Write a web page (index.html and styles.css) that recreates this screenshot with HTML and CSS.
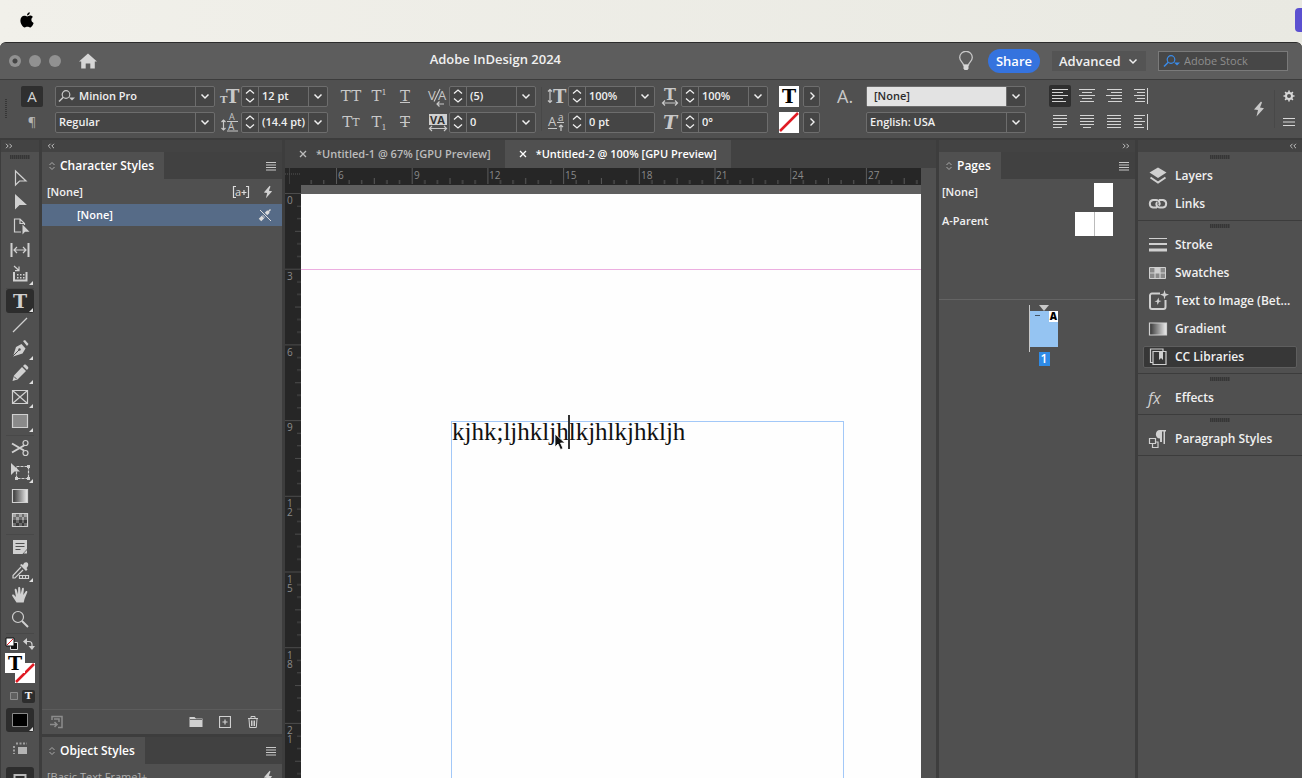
FILE: index.html
```html
<!DOCTYPE html>
<html lang="en">
<head>
<meta charset="utf-8">
<title>Adobe InDesign 2024</title>
<link rel="stylesheet" href="styles.css">
</head>
<body>
<svg class="defs" aria-hidden="true">
  <symbol id="chev" viewBox="0 0 10 10"><path d="M1.500 3.500 5 7l3.500-3.500" fill="none" stroke="currentColor" stroke-width="1.500"/></symbol>
  <symbol id="spin" viewBox="0 0 10 16"><path d="M1 5.500 5 2l4 3.500M1 10.500 5 14l4-3.500" fill="none" stroke="currentColor" stroke-width="1.300"/></symbol>
  <symbol id="right" viewBox="0 0 10 10"><path d="M3.500 1.500 7 5 3.500 8.500" fill="none" stroke="currentColor" stroke-width="1.400"/></symbol>
  <symbol id="find" viewBox="0 0 18 14"><circle cx="8" cy="5.500" r="3.800" fill="none" stroke="currentColor" stroke-width="1.200"/><path d="M5.300 8.300 1 12.500" stroke="currentColor" stroke-width="1.500"/><path d="M11 8.500h6l-3 3z" fill="currentColor"/></symbol>
  <symbol id="bolt" viewBox="0 0 12 16"><path d="M8 .5 1 8.500l4 .6L3.500 15.500 11 7.200l-4-.8 2-5z" fill="currentColor"/></symbol>
  <symbol id="menu" viewBox="0 0 12 10"><path d="M1 1.500h10M1 4h10M1 6.500h10M1 9h10" stroke="currentColor"/></symbol>
  <symbol id="updown" viewBox="0 0 8 10"><path d="M1.500 4 4 1.500 6.500 4M1.500 6 4 8.500 6.500 6" fill="none" stroke="currentColor"/></symbol>
  <symbol id="dblr" viewBox="0 0 8 6"><path d="M1 .8 3.200 3 1 5.200M4.500.8 6.700 3 4.500 5.200" fill="none" stroke="currentColor"/></symbol>
  <symbol id="dbll" viewBox="0 0 8 6"><path d="M3.500.8 1.300 3 3.500 5.200M7 .8 4.800 3 7 5.200" fill="none" stroke="currentColor"/></symbol>
  <symbol id="cross" viewBox="0 0 8 8"><path d="M1 1l6 6M7 1 1 7" stroke="currentColor" stroke-width="1.300"/></symbol>
</svg>

<header class="menubar">
  <svg class="apple" viewBox="0 0 14 16"><path d="M9.800.3c.1 1.600-1.200 3.100-2.800 3.100C6.900 1.900 8.300.500 9.800.3zM7.200 4.400c.7 0 1.600-.8 3-.8 1.100 0 2.200.6 2.800 1.500-2.400 1.400-2 4.900.6 5.800-.5 1.700-2.100 4.500-3.500 4.500-1 0-1.500-.6-2.700-.6s-1.800.6-2.700.6C2.700 15.400.4 11.800.4 8.600c0-3.100 1.900-4.800 3.900-4.800 1.300 0 2.200.6 2.900.6z"/></svg>
  <span class="menu-extra"></span>
</header>

<div class="window">
  <div class="titlebar">
    <div class="side">
      <button class="light close" aria-label="Close"></button><button class="light" aria-label="Minimise"></button><button class="light" aria-label="Zoom"></button>
      <button class="home" aria-label="Home"><svg width="18" height="16" viewBox="0 0 18 16"><path d="M9 .5 0 8.500h2.200V15.500h4.500v-5h4.600v5h4.500V8.500H18z" fill="#d6d6d6"/></svg></button>
    </div>
    <h1 class="apptitle">Adobe InDesign 2024</h1>
    <div class="side end">
      <button class="bulb" aria-label="Tips"><svg width="16" height="20" viewBox="0 0 16 20"><path d="M5.500 14c0-2.500-3.800-3.700-3.800-7.400a6.300 6.300 0 0 1 12.600 0c0 3.700-3.800 4.900-3.800 7.400z" fill="none" stroke="#c8c8c8" stroke-width="1.300"/><path d="M5.500 14h5v3.500l-1 1.500h-3l-1-1.500z" fill="#d8d8d8"/></svg></button>
      <button class="share">Share</button>
      <button class="workspace">Advanced <svg width="10" height="10"><use href="#chev"/></svg></button>
      <label class="stock"><svg width="18" height="14"><use href="#find"/></svg><input type="search" placeholder="Adobe Stock" aria-label="Adobe Stock"></label>
    </div>
  </div>

  <div class="control">
    <span class="handle"></span>
    <div class="col modes"><button class="mode on" aria-label="Character">A</button><button class="mode pilcrow" aria-label="Paragraph">¶</button></div>
    <div class="col wide">
      <div class="field"><svg class="lead" width="18" height="14"><use href="#find"/></svg><input value="Minion Pro" aria-label="Font"><button class="drop" aria-label="Fonts"><svg><use href="#chev"/></svg></button></div>
      <div class="field"><input value="Regular" aria-label="Font style"><button class="drop" aria-label="Styles"><svg><use href="#chev"/></svg></button></div>
    </div>
    <div class="col glyphs">
      <span class="gl"><svg viewBox="0 0 20 20"><text x="0" y="17" font-size="10" font-weight="bold">T</text><text x="6" y="17" font-size="18" font-weight="bold">T</text></svg></span>
      <span class="gl"><svg viewBox="0 0 20 20"><text class="sans" x="9" y="8" font-size="9">A</text><text class="sans" x="8" y="18" font-size="10">A</text><path d="M7 9.500h11M7 19h11M3.500 8v10M1.500 10l2-2 2 2M1.500 16l2 2 2-2" class="ln"/></svg></span>
    </div>
    <div class="col num">
      <div class="field"><button class="spin" aria-label="Step size"><svg><use href="#spin"/></svg></button><input value="12 pt" aria-label="Font size"><button class="drop" aria-label="Sizes"><svg><use href="#chev"/></svg></button></div>
      <div class="field"><button class="spin" aria-label="Step leading"><svg><use href="#spin"/></svg></button><input value="(14.4 pt)" aria-label="Leading"><button class="drop" aria-label="Leadings"><svg><use href="#chev"/></svg></button></div>
    </div>
    <div class="case">
      <button>TT</button><button>T<sup>1</sup></button><button class="ul">T</button>
      <button>T<small>T</small></button><button>T<sub>1</sub></button><button class="st">T</button>
    </div>
    <div class="col glyphs">
      <span class="gl"><svg viewBox="0 0 20 20"><text class="sans" x="0" y="14" font-size="13">V</text><text class="sans" x="10" y="14" font-size="13">A</text><path d="M12 3 6 15.500M9 18h7M11.500 15.500 9 18l2.500 2.500" class="ln"/></svg></span>
      <span class="gl"><svg viewBox="0 0 20 20"><path d="M1 2h18v11H1z" fill="#d0d0d0"/><text x="2" y="12" font-size="11" font-weight="bold" class="sans dark">VA</text><path d="M1.500 16.500h17M4 14l-2.500 2.500L4 19M16 14l2.500 2.500L16 19" class="ln"/></svg></span>
    </div>
    <div class="col num">
      <div class="field"><button class="spin" aria-label="Step kerning"><svg><use href="#spin"/></svg></button><input value="(5)" aria-label="Kerning"><button class="drop" aria-label="Kernings"><svg><use href="#chev"/></svg></button></div>
      <div class="field"><button class="spin" aria-label="Step tracking"><svg><use href="#spin"/></svg></button><input value="0" aria-label="Tracking"><button class="drop" aria-label="Trackings"><svg><use href="#chev"/></svg></button></div>
    </div>
    <span class="rule"></span>
    <div class="col glyphs">
      <span class="gl"><svg viewBox="0 0 20 20"><text x="6" y="17" font-size="18" font-weight="bold">T</text><path d="M3 3.500v13M1 5.500l2-2 2 2M1 14.500l2 2 2-2" class="ln"/></svg></span>
      <span class="gl"><svg viewBox="0 0 20 20"><text class="sans" x="1" y="14" font-size="13">A</text><text class="sans" x="11" y="9" font-size="10">a</text><path d="M1 16.500h9M10 10.500h7M14 19v-6M12 15l2-2 2 2" class="ln"/></svg></span>
    </div>
    <div class="col num">
      <div class="field"><button class="spin" aria-label="Step vertical scale"><svg><use href="#spin"/></svg></button><input value="100%" aria-label="Vertical scale"><button class="drop" aria-label="Vertical scales"><svg><use href="#chev"/></svg></button></div>
      <div class="field"><button class="spin" aria-label="Step baseline shift"><svg><use href="#spin"/></svg></button><input value="0 pt" aria-label="Baseline shift"></div>
    </div>
    <div class="col glyphs">
      <span class="gl"><svg viewBox="0 0 20 20"><text x="4" y="14" font-size="16" font-weight="bold">T</text><path d="M2.500 17h15M5 14.500 2.500 17 5 19.500M15 14.500l2.500 2.500-2.500 2.500" class="ln"/></svg></span>
      <span class="gl"><svg viewBox="0 0 20 20"><text x="3" y="17" font-size="19" font-style="italic">T</text></svg></span>
    </div>
    <div class="col num">
      <div class="field"><button class="spin" aria-label="Step horizontal scale"><svg><use href="#spin"/></svg></button><input value="100%" aria-label="Horizontal scale"><button class="drop" aria-label="Horizontal scales"><svg><use href="#chev"/></svg></button></div>
      <div class="field"><button class="spin" aria-label="Step skew"><svg><use href="#spin"/></svg></button><input value="0°" aria-label="Skew"></div>
    </div>
    <div class="col paint">
      <div class="pair"><button class="chip fillchip">T</button><button class="go" aria-label="Fill options"><svg><use href="#right"/></svg></button></div>
      <div class="pair"><button class="chip nochip" aria-label="No stroke"><svg viewBox="0 0 20 20"><path d="M1 19 19 1" stroke="#e01b24" stroke-width="2.500"/></svg></button><button class="go" aria-label="Stroke options"><svg><use href="#right"/></svg></button></div>
    </div>
    <div class="col cs"><span class="adot">A.</span></div>
    <div class="col wide">
      <div class="field"><input class="lit" value="[None]" aria-label="Character style"><button class="drop" aria-label="Character styles"><svg><use href="#chev"/></svg></button></div>
      <div class="field"><input value="English: USA" aria-label="Language"><button class="drop" aria-label="Languages"><svg><use href="#chev"/></svg></button></div>
    </div>
    <div class="aligns">
      <button class="on" aria-label="Align left"><svg viewBox="0 0 16 16"><path d="M0 1.500h16M0 4.500h11M0 7.500h16M0 10.500h11M0 13.500h14"/></svg></button>
      <button aria-label="Align centre"><svg viewBox="0 0 16 16"><path d="M0 1.500h16M3 4.500h10M0 7.500h16M3 10.500h10M1 13.500h14"/></svg></button>
      <button aria-label="Align right"><svg viewBox="0 0 16 16"><path d="M1 1.500h15M5 4.500h11M0 7.500h16M5 10.500h11M2 13.500h14"/></svg></button>
      <button aria-label="Align towards spine"><svg viewBox="0 0 16 16"><path d="M1 1.500h11M4 4.500h8M1 7.500h11M4 10.500h8M2 13.500h10M14.500 0v16"/></svg></button>
      <button aria-label="Justify, last left"><svg viewBox="0 0 16 16"><path d="M1 1.500h14M1 4.500h14M1 7.500h14M1 10.500h14M1 13.500h9"/></svg></button>
      <button aria-label="Justify, last centred"><svg viewBox="0 0 16 16"><path d="M1 1.500h14M1 4.500h14M1 7.500h14M1 10.500h14M4 13.500h8"/></svg></button>
      <button aria-label="Justify all"><svg viewBox="0 0 16 16"><path d="M1 1.500h14M1 4.500h14M1 7.500h14M1 10.500h14M1 13.500h14"/></svg></button>
      <button aria-label="Align away from spine"><svg viewBox="0 0 16 16"><path d="M1 1.500h11M1 4.500h8M1 7.500h11M1 10.500h8M1 13.500h10M14.500 0v16"/></svg></button>
    </div>
    <button class="quick" aria-label="Quick apply"><svg width="12" height="16"><use href="#bolt"/></svg></button>
    <div class="col last">
      <button aria-label="Customise"><svg width="12" height="12" viewBox="0 0 12 12"><circle cx="6" cy="6" r="3" fill="none" stroke="#d8d8d8" stroke-width="2"/><path d="M6 .5V3M6 9v2.500M.5 6H3M9 6h2.500M2.100 2.100 3.800 3.800M8.200 8.200l1.700 1.700M9.900 2.100 8.200 3.800M3.800 8.200 2.100 9.900" stroke="#d8d8d8" stroke-width="1.600"/></svg></button>
      <button aria-label="Menu"><svg width="12" height="12" viewBox="0 0 12 12"><path d="M0 2.500h12M0 6h12M0 9.500h12" stroke="#d8d8d8" stroke-width="1.200"/></svg></button>
    </div>
  </div>

  <main class="work">
    <nav class="tools" aria-label="Tools">
      <div class="strip"><svg width="8" height="6"><use href="#dblr"/></svg></div>
      <span class="grip"></span>
      <div class="set">
        <button class="tool" aria-label="Selection"><svg viewBox="0 0 20 20"><path d="M5.500 3v14l4-4H16z" class="o"/></svg></button>
        <button class="tool" aria-label="Direct selection"><svg viewBox="0 0 20 20"><path d="M5 2v15.500l4.500-4.500H17z" class="f"/></svg></button>
        <button class="tool" aria-label="Page"><svg viewBox="0 0 20 20"><path d="M11 16H4.500V3H10l4.500 4.500V9M10 3v4.500h4.500" class="o"/><path d="M12.500 8.500v10l2.500-2.800h4.500z" class="f"/></svg></button>
        <button class="tool" aria-label="Gap"><svg viewBox="0 0 20 20"><path d="M1.500 3v14M18.500 3v14" class="o w2"/><path d="M4 10h12M7 7l-3 3 3 3M13 7l3 3-3 3" class="o"/></svg></button>
        <button class="tool more" aria-label="Content collector"><svg viewBox="0 0 20 20"><path d="M4 8v8.500h12.500V8" class="o w2"/><path d="M4 2l5 4.500M9 2.500v4.200H5" class="o"/><path d="M7 10h1.500v1.500H7zM10 10h1.500v1.500H10zM13 10h1.500v1.500H13zM7 13h1.500v1.500H7zM10 13h1.500v1.500H10zM13 13h1.500v1.500H13z" class="f"/></svg></button>
      </div>
      <div class="set">
        <button class="tool more on" aria-label="Type"><span class="tt">T</span></button>
        <button class="tool" aria-label="Line"><svg viewBox="0 0 20 20"><path d="M3 17 17 3" class="o"/></svg></button>
        <button class="tool more" aria-label="Pen"><svg viewBox="0 0 20 20"><path d="m11.500 5 4 4.500-3 5-9.500 3 3-9.500zM13 2l2-1 3.500 4-1.500 2z" class="f"/><path d="m3 17 6-6" stroke="#505050"/><circle cx="9.500" cy="10.500" r="1.200" fill="#505050"/></svg></button>
        <button class="tool more" aria-label="Pencil"><svg viewBox="0 0 20 20"><path d="m12 4 4 4-8.500 8.500L2.500 18 4 12.500zM13 3l1.500-1.500c1-.8 4.500 2.500 3.800 3.700L17 7z" class="f"/><path d="m4 13.500 2.500 2.500" stroke="#505050"/></svg></button>
        <button class="tool more" aria-label="Rectangle frame"><svg viewBox="0 0 20 20"><path d="M2.500 3.500h15v13h-15zM2.500 3.500l15 13M17.500 3.500l-15 13" class="o"/></svg></button>
        <button class="tool more" aria-label="Rectangle"><svg viewBox="0 0 20 20"><path d="M2.500 3.500h15v13h-15z" fill="#8a8a8a" stroke="#d0d0d0" stroke-width="1.200"/></svg></button>
      </div>
      <div class="set">
        <button class="tool" aria-label="Scissors"><svg viewBox="0 0 20 20"><path d="M2 5.500 14 12.500M2 14.500 14 7.500" class="o w2"/><circle cx="15.500" cy="5" r="2.500" class="o"/><circle cx="15.500" cy="15" r="2.500" class="o"/></svg></button>
        <button class="tool more" aria-label="Free transform"><svg viewBox="0 0 20 20"><path d="M6.500 4.500h12v12h-12z" class="o" stroke-dasharray="3 1"/><path d="M5 15h3v3H5zM17 15h3v3h-3zM17 3h3v3h-3z" class="f"/><path d="M1 1v12l3.500-3.500H10z" class="f"/></svg></button>
        <button class="tool" aria-label="Gradient swatch"><svg viewBox="0 0 20 20"><defs><linearGradient id="g1"><stop stop-color="#333"/><stop offset="1" stop-color="#eee"/></linearGradient></defs><path d="M2.500 3.500h15v13h-15z" fill="url(#g1)" stroke="#d0d0d0" stroke-width="1.200"/></svg></button>
        <button class="tool" aria-label="Gradient feather"><svg viewBox="0 0 20 20"><path d="M2.500 3.500h15v13h-15z" fill="#6c6c6c" stroke="#d0d0d0" stroke-width="1.200"/><path d="M3 4h3v3H3zM9 4h3v3H9zM14 4h3v3h-3zM6 7h3v3H6zM12 7h2v3h-2z" fill="#a4a4a4"/><path d="M3 10h3v3H3zM9 10h3v3H9zM14 10h3v3h-3zM6 13h3v3H6zM12 13h2v3h-2z" fill="#3c3c3c"/></svg></button>
      </div>
      <div class="set">
        <button class="tool" aria-label="Note"><svg viewBox="0 0 20 20"><path d="M3 3h14v9l-4.500 5H3z" class="f"/><path d="M5.500 6.500h9M5.500 9.500h9M5.500 12.500h5" stroke="#505050"/><path d="M13.500 16.500 17 13v3.500z" class="f"/></svg></button>
        <button class="tool more" aria-label="Colour theme"><svg viewBox="0 0 20 20"><path d="m11 6-8 8.500V17h2l8-8" class="o"/><path d="m10 4 6 6 1.500-1.500-1-1.500C19 5 18.500 2 17 1.500S14 1.500 13 4l-1.500-1z" class="f"/><path d="M9.500 14.500h9v3h-9zM12.500 14.500v3M15.500 14.500v3" class="o"/></svg></button>
        <button class="tool" aria-label="Hand"><svg viewBox="0 0 20 20"><path d="M6.500 17.500 2.300 11c-.7-1.300.6-2 1.500-1.200L6 12 4.700 5c-.2-1.400 1.500-1.700 1.900-.4L8 9.300 8.200 3c0-1.400 1.900-1.400 2 0l.5 6.300L12 3.600c.3-1.300 2-.9 1.900.4l-.6 6 2.300-3.500c.8-1.100 2.200-.2 1.600 1L14.500 14l-.8 3.500z" class="f"/></svg></button>
        <button class="tool" aria-label="Zoom"><svg viewBox="0 0 20 20"><circle cx="8" cy="8" r="5.500" class="o"/><path d="m12 12 6 6" class="o w2"/></svg></button>
      </div>
      <div class="mini">
        <button aria-label="Default colours"><svg width="14" height="14" viewBox="0 0 14 14"><path d="M5.500 5.500h7v7h-7z" fill="#111" stroke="#ddd"/><path d="M1 1h8v8H1z" fill="#fff" stroke="#111"/><path d="m2 8 6-6" stroke="#e01b24"/></svg></button>
        <button aria-label="Swap colours"><svg width="12" height="12" viewBox="0 0 12 12"><path d="M3 3.500h3c2 0 3 1 3 3v2" class="o"/><path d="M4 0v7L0 3.500zM5.500 8H12l-3 4z" class="f"/></svg></button>
      </div>
      <div class="swatches"><span class="stroke-sw"><svg viewBox="0 0 20 20"><path d="M1 19 19 1" stroke="#e01b24" stroke-width="2.500"/></svg></span><span class="fill-sw">T</span></div>
      <div class="mini low">
        <button aria-label="Affects container"><svg width="10" height="10" viewBox="0 0 10 10"><path d="M1.500 1.500h7v7h-7z" fill="#606060" stroke="#8c8c8c"/></svg></button>
        <button class="on" aria-label="Affects text">T</button>
      </div>
      <button class="tool more on" aria-label="Apply colour"><svg viewBox="0 0 20 20"><path d="M2.500 3.500h15v13h-15z" fill="#000" stroke="#8a8a8a"/></svg></button>
      <button class="tool late" aria-label="View options"><svg viewBox="0 0 20 20"><path d="M8 8h9v7H8z" fill="#b4b4b4"/><path d="M4 7v8M6 4.500h11" stroke="#a0a0a0" stroke-width="2" stroke-dasharray="2 1.500"/></svg></button>
      <button class="tool on" aria-label="Screen mode"><svg viewBox="0 0 20 20"><path d="M4.500 6h11v11h-11z" fill="none" stroke="#b8b8b8" stroke-width="2"/><path d="M8 9h5v5H8z" class="f"/></svg></button>
    </nav>

    <aside class="left">
      <div class="strip"><svg width="8" height="6"><use href="#dbll"/></svg></div>
      <section class="panel grow">
        <div class="tabs"><h2 class="tab"><svg width="8" height="10"><use href="#updown"/></svg>Character Styles</h2><button class="pm" aria-label="Panel menu"><svg width="12" height="10"><use href="#menu"/></svg></button></div>
        <div class="prow"><span>[None]</span><svg class="aplus" width="18" height="14" viewBox="0 0 18 14"><path d="M4 1.500H1.500v11H4M14 1.500h2.500v11H14M9.500 7.500h5M12 5v5" fill="none" stroke="#dcdcdc" stroke-width="1.200"/><text x="3" y="11" font-size="11" fill="#dcdcdc">a</text></svg><svg width="10" height="14"><use href="#bolt"/></svg></div>
        <div class="prow picked"><span>[None]</span><svg width="14" height="14" viewBox="0 0 14 14"><path d="M2 12 5 9M5.500 8.500l5-5" stroke="#dcdcdc" stroke-width="3.500"/><path d="m10 4 2.500-2.500" stroke="#dcdcdc" stroke-width="1.500"/><path d="m2 2 11 11" stroke="#566b87" stroke-width="3"/><path d="m2 2 11 11" stroke="#dcdcdc"/></svg></div>
        <div class="space"></div>
        <div class="foot">
          <button aria-label="Load" class="dim"><svg width="14" height="14" viewBox="0 0 14 14"><path d="M3 5V1.500h10v11H9M1 9.500h7M5.500 7 8 9.500 5.500 12M5 4h5v3" fill="none" stroke="#8c8c8c" stroke-width="1.500"/></svg></button>
          <button aria-label="New group"><svg width="14" height="12" viewBox="0 0 14 12"><path d="M.5 1h5l1.500 1.500h6.500v8.500H.5z" fill="#d0d0d0"/><path d="M1 3.500h12" stroke="#6a6a6a"/></svg></button>
          <button aria-label="New style"><svg width="12" height="12" viewBox="0 0 12 12"><path d="M.5.5h11v11H.5zM6 3.500v5M3.500 6h5" fill="none" stroke="#d0d0d0" stroke-width="1.200"/></svg></button>
          <button aria-label="Delete"><svg width="12" height="14" viewBox="0 0 12 14"><path d="M1 3.500h10M4 3V1.500h4V3M2 4l.7 8.500h6.600L10 4M4.500 5.500v5.500M6 5.500v5.500M7.500 5.500v5.500" fill="none" stroke="#d0d0d0"/></svg></button>
        </div>
      </section>
      <section class="panel">
        <div class="tabs"><h2 class="tab"><svg width="8" height="10"><use href="#updown"/></svg>Object Styles</h2><button class="pm" aria-label="Panel menu"><svg width="12" height="10"><use href="#menu"/></svg></button></div>
        <div class="prow faint"><span>[Basic Text Frame]+</span><svg width="10" height="14"><use href="#bolt"/></svg></div>
      </section>
    </aside>

    <section class="doc">
      <div class="doctabs">
        <button class="dtab"><svg width="8" height="8"><use href="#cross"/></svg>*Untitled-1 @ 67% [GPU Preview]</button>
        <button class="dtab on"><svg width="8" height="8"><use href="#cross"/></svg>*Untitled-2 @ 100% [GPU Preview]</button>
      </div>
      <div class="view">
        <svg class="corner" viewBox="0 0 16 16"><path d="M4.500 0v16M0 5.500h16" stroke="#555" stroke-dasharray="1 1"/></svg>
        <svg class="hruler">
          <defs><pattern id="ph" x="35" width="75.700" height="16" patternUnits="userSpaceOnUse"><path d="M.5 0v16M13.100 12v4M25.700 12v4M38.300 10v6M50.900 12v4M63.500 12v4" stroke="#5a5a5a"/></pattern></defs>
          <rect width="100%" height="16" fill="url(#ph)"/>
          <text x="37" y="11">6</text><text x="113" y="11">9</text><text x="188" y="11">12</text><text x="264" y="11">15</text><text x="340" y="11">18</text><text x="415" y="11">21</text><text x="491" y="11">24</text><text x="567" y="11">27</text>
        </svg>
        <svg class="vruler">
          <defs><pattern id="pv" y="8" width="16" height="75.700" patternUnits="userSpaceOnUse"><path d="M0 .5h16M12 13.100h4M12 25.700h4M10 38.300h6M12 50.900h4M12 63.500h4" stroke="#4c4c4c"/></pattern></defs>
          <rect width="16" height="100%" fill="url(#pv)"/>
          <text x="2" y="19">0</text><text x="2" y="95">3</text><text x="2" y="171">6</text><text x="2" y="246">9</text>
          <text><tspan x="2" y="322">1</tspan><tspan x="2" y="331">2</tspan></text>
          <text><tspan x="2" y="398">1</tspan><tspan x="2" y="407">5</tspan></text>
          <text><tspan x="2" y="474">1</tspan><tspan x="2" y="483">8</tspan></text>
          <text><tspan x="2" y="549">2</tspan><tspan x="2" y="558">1</tspan></text>
        </svg>
        <div class="canvas">
          <div class="sheet">
            <div class="margin"></div>
            <div class="frame"><p>kjhk;ljhkljh<i class="caret"></i>lkjhlkjhkljh</p></div>
            <svg class="pointer" viewBox="0 0 12 18"><path d="M1 1v13l3-3 2.500 5.500 2.500-1L6.500 10H11z" fill="#111" stroke="#fff" stroke-width=".8"/></svg>
          </div>
        </div>
        <div class="scroll"></div>
      </div>
    </section>

    <aside class="pages">
      <div class="strip end"><svg width="8" height="6"><use href="#dblr"/></svg></div>
      <section class="panel grow">
        <div class="tabs"><h2 class="tab"><svg width="8" height="10"><use href="#updown"/></svg>Pages</h2><button class="pm" aria-label="Panel menu"><svg width="12" height="10"><use href="#menu"/></svg></button></div>
        <div class="masters">
          <div class="master"><span>[None]</span><i class="leaf"></i></div>
          <div class="master"><span>A-Parent</span><i class="leaf"></i><i class="leaf second"></i></div>
        </div>
        <div class="spreads">
          <svg class="mark" width="10" height="6" viewBox="0 0 10 6"><path d="M0 0h10L5 6z" fill="#c8c8c8"/></svg>
          <div class="thumb"><i class="spine"></i><i class="dash"></i><b>A</b></div>
          <span class="pno">1</span>
        </div>
      </section>
    </aside>

    <aside class="dock">
      <div class="strip end"><svg width="8" height="6"><use href="#dbll"/></svg></div>
      <div class="group"><span class="grip"></span>
        <button class="item"><svg viewBox="0 0 20 20"><path d="m10 1.500 8.500 5L10 12 1.500 6.500z" class="f"/><path d="m2.500 11.500 7.500 5 7.500-5" class="o w2"/></svg>Layers</button>
        <button class="item"><svg viewBox="0 0 20 20"><path d="M9 13.500H5a3.800 3.800 0 0 1 0-7.500h3a3.500 3.500 0 0 1 3 5.500M11 6h4a3.800 3.800 0 0 1 0 7.500h-3a3.500 3.500 0 0 1-3-5.500" class="o w2"/></svg>Links</button>
      </div>
      <div class="group"><span class="grip"></span>
        <button class="item"><svg viewBox="0 0 20 20"><path d="M1 3.500h18" class="o"/><path d="M1 9h18" class="o w2"/><path d="M1 15h18" stroke="#d0d0d0" stroke-width="3"/></svg>Stroke</button>
        <button class="item"><svg viewBox="0 0 20 20"><path d="M1.500 4.500h16v11h-16z" fill="#8a8a8a" stroke="#d0d0d0"/><path d="M7 5h5v5H7z" class="f"/><path d="M2 10h15.500M7 5v10.500M12 5v10.500" class="o"/></svg>Swatches</button>
        <button class="item"><svg viewBox="0 0 20 20"><path d="M12 2.500H4a2 2 0 0 0-2 2V16a2 2 0 0 0 2 2h11.500a2 2 0 0 0 2-2V9" class="o w2"/><path d="m16.500-1 1 3.500L21 3.500 17.500 5l-1 3.500-1-3.500L12 3.500l3.500-1zM10.500 6.500l.5 3 2.500.5-2.500 1-1.500 3-.5-3-2.500-.5 2.500-1z" class="f"/></svg>Text to Image (Bet...</button>
        <button class="item"><svg viewBox="0 0 20 20"><path d="M1.500 4h17v12h-17z" fill="url(#g1)" stroke="#d0d0d0" stroke-width="1.200"/></svg>Gradient</button>
        <button class="item on"><svg viewBox="0 0 20 20"><path d="M5 4.500h13v13H5zM5 15.500H2.500V2H15v2.500" class="o"/><path d="M11 5h4v8l-2-2-2 2z" class="f"/></svg>CC Libraries</button>
      </div>
      <div class="group"><span class="grip"></span>
        <button class="item"><span class="fx">fx</span>Effects</button>
      </div>
      <div class="group"><span class="grip"></span>
        <button class="item"><svg viewBox="0 0 20 20"><path d="M12 9.500C6.500 9.500 6.500 1 12 1h6v1.500h-1V15h-1.500V2.500H14V13h-2z" class="f"/><path d="M1.500 9.500h6v5h-6zM4.500 14.500v4h5.500v-5.500H7.500" class="o"/></svg>Paragraph Styles</button>
      </div>
    </aside>
  </main>
</div>
</body>
</html>
```

FILE: styles.css
```css
* { box-sizing: border-box; }
body {
  margin: 0;
  height: 100vh;
  display: flex;
  flex-direction: column;
  overflow: hidden;
  background: #eeede7;
  color: #f0f0f0;
  font: 600 11px/16px "Open Sans", "Noto Sans", sans-serif;
}
button, input {
  margin: 0; padding: 0; border: 0; background: none; color: inherit; font: inherit; min-width: 0;
}
h1, h2, p { margin: 0; font: inherit; }
svg { display: block; flex: none; }
.defs { position: absolute; width: 0; height: 0; }
.o { fill: none; stroke: #d0d0d0; stroke-width: 1.2; }
.w2 { stroke-width: 2; }
.f { fill: #d0d0d0; }

.menubar { flex: none; height: 42px; display: flex; align-items: center; justify-content: space-between; padding: 0 0 2px 20px; background: linear-gradient(90deg, #f1f0ea, #e9e9e2); }
.apple { width: 14px; height: 16px; }
.menu-extra { width: 7px; height: 24px; border-radius: 4px 0 0 4px; background: #5b50d0; }

.window { flex: 1; min-height: 0; display: flex; flex-direction: column; border-top: 1px solid #2c2c2c; border-radius: 6px 6px 0 0; background: #505050; overflow: hidden; }
.titlebar { flex: none; height: 37px; display: flex; align-items: center; background: #5d5d5d; border-bottom: 1px solid #3c3c3c; }
.side { flex: none; width: 33%; display: flex; align-items: center; padding-left: 9px; }
.side.end { flex: 1; width: auto; justify-content: flex-end; padding: 0 14px 0 0; }
.light { width: 12px; height: 12px; margin-right: 8px; border-radius: 50%; background: #919191; }
.close { background: radial-gradient(circle, #444 0 2px, #919191 3px); }
.home { margin-left: 10px; }
.apptitle { font-size: 13px; padding-bottom: 4px; }
.bulb { margin-right: 14px; }
.share { width: 52px; height: 24px; border-radius: 12px; background: #3573de; color: #fff; font-size: 13px; margin-right: 12px; }
.workspace { width: 94px; height: 20px; display: flex; align-items: center; justify-content: space-between; padding: 0 8px 0 7px; background: #545454; font-size: 13px; margin-right: 12px; }
.stock { width: 130px; height: 20px; display: flex; align-items: center; gap: 3px; padding: 0 4px; border: 1px solid #7a7a7a; background: #474747; color: #3b8be8; }
.stock input { flex: 1; font-weight: 400; }
.stock input::placeholder { color: #8e8e8e; opacity: 1; }

.control { flex: none; height: 60px; display: flex; align-items: center; padding: 0 7px 0 5px; border-bottom: 2px solid #3c3c3c; background: #505050; }
.handle { width: 2px; height: 20px; margin-right: 14px; background: repeating-linear-gradient(#363636 0 1px, #505050 1px 2px); }
.col { display: flex; flex-direction: column; gap: 5px; flex: none; }
.modes { width: 22px; margin-right: 12px; }
.mode { height: 21px; border-radius: 2px; color: #d4d4d4; font-size: 15px; font-weight: 400; }
.mode.on { background: #2f2f2f; }
.pilcrow { font-size: 13px; color: #b4b4b4; }
.wide { width: 160px; }
.num { width: 87px; }
.field { height: 21px; display: flex; border: 1px solid #6d6d6d; border-radius: 2px; background: #454545; }
.field input { flex: 1; padding-left: 3px; }
.field .lead { align-self: center; margin: 0 0 0 2px; color: #c8c8c8; }
.field .lit { background: #e3e3e3; color: #2c2c2c; padding-left: 7px; }
.drop, .spin { flex: none; width: 19px; display: flex; align-items: center; justify-content: center; border-left: 1px solid #6d6d6d; }
.spin { width: 17px; border: 0; border-right: 1px solid #6d6d6d; }
.drop svg { width: 10px; height: 10px; }
.spin svg { width: 10px; height: 16px; }
.glyphs { width: 20px; margin: 0 1px 0 5px; }
.gl { height: 21px; }
.gl svg { width: 20px; height: 20px; overflow: visible; fill: #c8c8c8; font-family: "DejaVu Serif", serif; }
.gl .sans { font-family: "Open Sans", sans-serif; font-weight: 400; }
.gl .dark { fill: #333; font-weight: 700; }
.gl .ln { fill: none; stroke: #c8c8c8; stroke-width: 1.2; }
.case { flex: none; display: grid; grid-template-columns: 22px 22px 18px; grid-auto-rows: 21px; column-gap: 6px; row-gap: 5px; margin: 0 9px 0 12px; }
.case button { color: #c8c8c8; font: 15px/20px "DejaVu Serif", serif; white-space: nowrap; display: flex; justify-content: center; align-items: center; }
.case small { font-size: 11px; align-self: flex-end; }
.case sup, .case sub { font-size: 8px; line-height: 10px; align-self: flex-start; padding-top: 2px; }
.case sub { align-self: flex-end; }
.case .ul { text-decoration: underline; }
.case .st { text-decoration: line-through; }
.rule { width: 1px; height: 44px; margin: 0 0 0 5px; background: #484848; }
.paint { margin: 0 17px 0 11px; }
.pair { display: flex; gap: 4px; height: 21px; }
.chip { width: 20px; background: #fff; color: #000; }
.fillchip { font: 700 19px/20px "DejaVu Serif", serif; }
.go { width: 17px; display: flex; align-items: center; justify-content: center; border: 1px solid #6d6d6d; border-radius: 2px; background: #454545; }
.go svg { width: 10px; height: 10px; }
.cs { width: 29px; height: 47px; }
.adot { font-size: 18px; line-height: 21px; font-weight: 400; color: #c8c8c8; }
.aligns { flex: none; display: grid; grid-template-columns: repeat(4, 22px); grid-auto-rows: 22px; column-gap: 5px; row-gap: 4px; margin-left: 23px; }
.aligns button { display: flex; align-items: center; justify-content: center; border-radius: 2px; }
.aligns .on { background: #2f2f2f; }
.aligns svg { width: 16px; height: 16px; stroke: #d4d4d4; }
.quick { margin: 0 9px 0 auto; color: #c8c8c8; }
.last { width: 21px; gap: 14px; align-items: flex-end; border-left: 1px solid #484848; }

.work { flex: 1; min-height: 0; display: flex; background: #3d3d3d; gap: 3px; }
.strip { flex: none; height: 12px; display: flex; align-items: center; padding: 0 5px; background: #434343; color: #c0c0c0; }
.strip.end { justify-content: flex-end; }
.grip { flex: none; align-self: center; width: 20px; height: 4px; margin: 3px 0; background: repeating-linear-gradient(90deg, #363636 0 1px, #424242 1px 2px); }

.tools { flex: none; width: 39px; display: flex; flex-direction: column; align-items: center; background: #505050; border-left: 1px solid #3d3d3d; }
.tools .strip { align-self: stretch; padding-left: 4px; }
.tools .grip { margin: 3px 0 7px; }
.set { display: flex; flex-direction: column; padding-bottom: 2px; border-bottom: 1px solid #484848; }
.tool { flex: none; position: relative; width: 28px; height: 24px; display: flex; align-items: center; justify-content: center; border-radius: 3px; }
.tool svg { width: 20px; height: 20px; }
.tool.on { background: #2d2d2d; }
.tool.more::after { content: ""; position: absolute; right: 1px; bottom: 1px; border: 2px solid; border-color: transparent #ddd #ddd transparent; }
.tt { font: 700 19px/20px "DejaVu Serif", serif; color: #d0d0d0; }
.mini { flex: none; width: 30px; height: 19px; display: flex; align-items: center; justify-content: space-between; }
.mini.low { height: 14px; margin: 6px 0 5px; padding: 0 0 0 4px; }
.mini .on { width: 13px; height: 13px; border-radius: 2px; background: #2d2d2d; font: 700 10px/12px "DejaVu Serif", serif; }
.swatches { flex: none; position: relative; width: 30px; height: 30px; }
.fill-sw, .stroke-sw { position: absolute; width: 20px; height: 20px; background: #fff; color: #000; font: 700 19px/20px "DejaVu Serif", serif; text-align: center; }
.fill-sw { left: 0; top: 0; }
.stroke-sw { right: 0; bottom: 0; }
.late { margin: 5px 0 6px; }

.left { flex: none; width: 240px; display: flex; flex-direction: column; }
.panel { background: #505050; display: flex; flex-direction: column; flex: none; }
.panel.grow { flex: 1; min-height: 0; }
.left .panel + .panel { height: 41px; margin-top: 3px; overflow: hidden; }
.tabs { flex: none; height: 27px; display: flex; justify-content: space-between; background: #414141; }
.tab { display: flex; align-items: center; gap: 4px; padding: 0 10px 0 6px; background: #505050; color: #fff; font-size: 12px; font-weight: 600; }
.tab svg { color: #aaa; }
.pm { color: #c8c8c8; padding: 0 5px; }
.prow { flex: none; height: 25px; display: flex; align-items: center; padding: 0 9px 0 5px; }
.prow span:first-child { flex: 1; }
.prow svg { color: #d0d0d0; }
.aplus { margin-right: 13px; font-weight: 400; overflow: visible; }
.prow.picked { height: 22px; padding: 0 10px 0 35px; background: #566b87; color: #fff; }
.faint { color: #b0b0b0; font-weight: 400; }
.space { flex: 1; }
.foot { flex: none; height: 25px; display: flex; align-items: center; gap: 16px; padding: 0 23px 0 7px; border-top: 1px solid #5c5c5c; }
.foot .dim { margin-right: auto; }

.doc { flex: 1; min-width: 0; display: flex; flex-direction: column; }
.doctabs { flex: none; height: 28px; display: flex; background: #424242; overflow: hidden; }
.dtab { display: flex; align-items: center; gap: 9px; padding: 0 14px; color: #bcbcbc; white-space: nowrap; }
.dtab.on { background: #505050; color: #fff; }
.view { flex: 1; min-height: 0; display: grid; grid-template: 17px 1fr / 16px 1fr 15px; }
.corner, .hruler, .vruler { background: #262626; width: 100%; height: 100%; }
.view text { fill: #8a8a8a; font: 10px "Open Sans", sans-serif; }
.hruler { grid-column: 2 / 3; }
.vruler { grid-column: 1; grid-row: 2; min-height: 0; }
.canvas { grid-column: 2; grid-row: 2; min-height: 0; padding-top: 9px; background: #5f5f5f; overflow: hidden; }
.sheet { position: relative; height: 100%; background: #fefefe; overflow: hidden; }
.margin { position: absolute; left: 0; right: 0; top: 75px; height: 1px; background: #ecaee0; }
.frame { position: absolute; left: 150px; top: 227px; width: 393px; bottom: -2px; border: 1px solid #a2c8f8; color: #111; font: 25px/20px "Liberation Serif", serif; }
.caret { position: absolute; top: -7px; width: 2px; height: 34px; margin-left: -1px; background: #333; }
.pointer { position: absolute; left: 253px; top: 239px; width: 12px; height: 18px; }
.scroll { grid-column: 3; grid-row: 1 / 3; background: #505050; }

.pages { flex: none; width: 196px; display: flex; flex-direction: column; }
.masters { flex: none; height: 121px; padding: 0 22px 0 3px; border-bottom: 1px solid #646464; }
.master { display: flex; align-items: flex-start; height: 29px; padding-top: 4px; }
.master span { flex: 1; padding-top: 1px; }
.leaf { width: 19px; height: 24px; background: #fff; }
.leaf.second { border-left: 1px solid #bbb; }
.spreads { flex: 1; padding-top: 5px; display: flex; flex-direction: column; align-items: center; padding-left: 14px; }
.thumb { position: relative; width: 28px; height: 36px; background: #95c4f2; display: flex; justify-content: flex-end; align-items: flex-start; }
.thumb b { background: #fff; color: #000; width: 9px; height: 11px; font-size: 10px; line-height: 11px; text-align: center; }
.spine { position: absolute; left: -1px; top: -6px; bottom: -5px; width: 1px; background: #c8c8c8; }
.dash { position: absolute; left: 5px; top: 4px; width: 5px; height: 1px; background: #456; }
.pno { margin-top: 5px; width: 11px; height: 14px; line-height: 14px; text-align: center; background: #2f8be6; color: #fff; font-size: 12px; }

.dock { flex: none; width: 164px; display: flex; flex-direction: column; background: #505050; }
.group { display: flex; flex-direction: column; padding-bottom: 2px; border-bottom: 1px solid #3c3c3c; }
.item { height: 28px; display: flex; align-items: center; gap: 7px; padding: 0 10px; font-size: 12px; text-align: left; white-space: nowrap; }
.item svg, .fx { width: 20px; height: 20px; overflow: visible; }
.item.on { height: 22px; margin: 3px 5px; padding: 0 4px; border-radius: 2px; background: #373737; border: 1px solid #5e5e5e; }
.fx { font: italic 400 16px/20px "Open Sans", sans-serif; color: #cfcfcf; }
```
